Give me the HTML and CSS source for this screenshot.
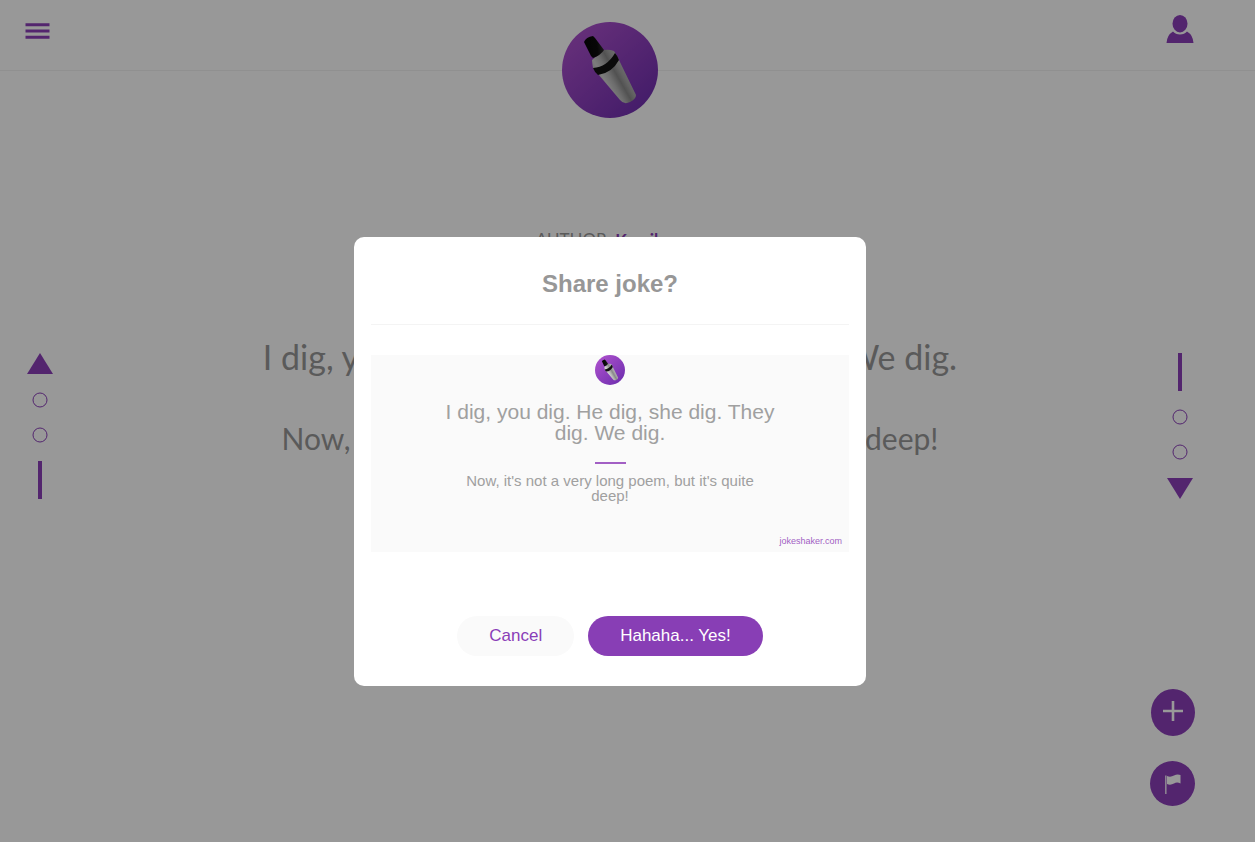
FILE: index.html
```html
<!DOCTYPE html>
<html lang="en">
<head>
<meta charset="utf-8">
<title>Jokeshaker</title>
<link rel="stylesheet" href="styles.css">
</head>
<body>
<svg class="defs" aria-hidden="true">
  <defs>
    <linearGradient id="disc" x1="0.1" y1="0.1" x2="0.85" y2="0.9">
      <stop offset="0" stop-color="#ab50cc"/>
      <stop offset="1" stop-color="#7230b0"/>
    </linearGradient>
    <linearGradient id="steel" gradientUnits="userSpaceOnUse" x1="38" y1="66" x2="66" y2="50">
      <stop offset="0" stop-color="#b4b4b4"/>
      <stop offset="0.25" stop-color="#d0d0d0"/>
      <stop offset="0.45" stop-color="#b4b4b4"/>
      <stop offset="0.65" stop-color="#888"/>
      <stop offset="0.8" stop-color="#a4a4a4"/>
      <stop offset="1" stop-color="#b8b8b8"/>
    </linearGradient>
    <linearGradient id="cap" x1="0" y1="0.5" x2="1" y2="0.4">
      <stop offset="0" stop-color="#050505"/>
      <stop offset="0.65" stop-color="#0c0c0c"/>
      <stop offset="1" stop-color="#303030"/>
    </linearGradient>
    <symbol id="shaker" viewBox="0 0 96 96">
      <circle cx="48" cy="48" r="48" fill="url(#disc)"/>
      <path d="M30 38Q30 40 31 46L58 78Q62 83 68 80Q74 77 74 73L57 38Q54 32 52 29Q47 27 42 28Z" fill="url(#steel)"/>
      <path d="M31 46Q45 45 53 31Q55 33 57 38Q50 51 36 53Q33 51 31 46Z" fill="#111"/>
      <path d="M22 20Q24 15 31 14L33 16L42 28Q39 33 31 36L29 34Z" fill="url(#cap)"/>
    </symbol>
    <symbol id="ring" viewBox="0 0 16 16">
      <circle cx="8" cy="8" r="7" fill="none" stroke="currentColor" stroke-width="1"/>
    </symbol>
  </defs>
</svg>

<header class="header">
  <button class="icon-button" aria-label="Menu">
    <svg width="25" height="17" viewBox="0 0 25 17"><path d="M0.500 0.300h24v3H0.500zM0.500 6.500h24v3H0.500zM0.500 12.700h24v3H0.500z" fill="currentColor"/></svg>
  </button>
  <a class="logo" href="#" aria-label="Jokeshaker home"><svg width="96" height="96"><use href="#shaker"/></svg></a>
  <button class="icon-button" aria-label="Profile">
    <svg width="28" height="28" viewBox="0 0 28 28"><g fill="currentColor"><ellipse cx="14" cy="8.700" rx="7.500" ry="8.700"/><path d="M0.500 28Q1 20 7 16.500Q9.500 19.500 14 19.500Q18.500 19.500 21 16.500Q27 20 27.500 28Z"/></g></svg>
  </button>
</header>

<main class="main">
  <nav class="side" aria-label="Previous jokes">
    <button class="step" aria-label="Previous"><svg width="26" height="21" viewBox="0 0 26 21"><path d="M13 0L26 21H0Z" fill="currentColor"/></svg></button>
    <svg width="16" height="16"><use href="#ring"/></svg>
    <svg width="16" height="16"><use href="#ring"/></svg>
    <span class="bar"></span>
  </nav>
  <article class="joke">
    <p class="author">AUTHOR: <a href="#">Kamil</a></p>
    <h1 class="setup">I dig, you dig. He dig, she dig. They dig. We dig.</h1>
    <p class="punchline">Now, it's not a very long poem, but it's quite deep!</p>
  </article>
  <nav class="side" aria-label="Next jokes">
    <span class="bar"></span>
    <svg width="16" height="16"><use href="#ring"/></svg>
    <svg width="16" height="16"><use href="#ring"/></svg>
    <button class="step" aria-label="Next"><svg width="26" height="21" viewBox="0 0 26 21"><path d="M0 0H26L13 21Z" fill="currentColor"/></svg></button>
  </nav>
</main>

<div class="actions">
  <button class="round round-add" aria-label="Add joke">
    <svg width="20" height="20" viewBox="0 0 20 20"><path d="M10 0V20M0 10H20" stroke="currentColor" stroke-width="2.600"/></svg>
  </button>
  <button class="round" aria-label="Report joke">
    <svg width="16" height="20" viewBox="0 0 16 20"><path d="M0 1.500H1.600V20H0Z" fill="currentColor" opacity=".8"/><path d="M2 2Q5.500 3.500 9 1.500Q12 0 15.500 1V9.500Q12 7.500 9 9.500Q5.500 11.500 2 10Z" fill="currentColor"/></svg>
  </button>
</div>

<div class="overlay">
  <section class="modal" role="dialog" aria-modal="true" aria-labelledby="share-title">
    <h2 class="title" id="share-title">Share joke?</h2>
    <div class="card">
      <svg width="30" height="30"><use href="#shaker"/></svg>
      <p class="card-setup">I dig, you dig. He dig, she dig. They dig. We dig.</p>
      <hr class="rule">
      <p class="card-punchline">Now, it's not a very long poem, but it's quite deep!</p>
      <p class="site">jokeshaker.com</p>
    </div>
    <div class="buttons">
      <button class="button">Cancel</button>
      <button class="button button-primary">Hahaha... Yes!</button>
    </div>
  </section>
</div>
</body>
</html>
```
FILE: styles.css
```css
* { box-sizing: border-box; }
body {
  margin: 0;
  min-height: 100vh;
  background: #fefefe;
  color: #979797;
  font-family: Lato, "Open Sans", sans-serif;
}
button {
  padding: 0;
  border: 0;
  background: none;
  color: #8a3eb8;
  font: inherit;
}
svg { display: block; }
p, h1, h2 { margin: 0; font-weight: 400; }
.defs { position: absolute; width: 0; height: 0; }

.header {
  display: grid;
  grid-template-columns: 1fr auto 1fr;
  height: 71px;
  padding: 0 61px 0 25px;
  border-bottom: 1px solid #f0f0f0;
}
.icon-button { align-self: start; justify-self: start; padding-top: 23px; }
.icon-button:last-child { justify-self: end; padding-top: 15px; }
.logo { padding-top: 22px; }

.main {
  display: grid;
  grid-template-columns: 80px 1fr 80px;
  padding-right: 35px;
}
.side {
  display: flex;
  flex-direction: column;
  align-items: center;
  justify-content: space-between;
  height: 146px;
  margin-top: 282px;
  color: #8a3eb8;
}
.bar { width: 4px; height: 38px; background: currentColor; }

.joke { padding-top: 159px; text-align: center; }
.author { padding-right: 26px; font-size: 17px; line-height: 20px; }
.author a { color: #8a3eb8; font-weight: 700; text-decoration: none; }
.setup { margin-top: 87px; font-size: 34px; line-height: 40px; }
.punchline { margin-top: 44px; font-size: 30px; line-height: 34px; }

.actions {
  position: fixed;
  right: 60px;
  bottom: 36px;
  display: flex;
  flex-direction: column;
  align-items: flex-end;
  gap: 25px;
}
.round {
  display: grid;
  place-items: center;
  width: 45px;
  height: 45px;
  border-radius: 50%;
  background: #8a3eb8;
  color: #fff;
}
.round-add { width: 44px; height: 47px; padding-bottom: 3px; }

.overlay {
  position: fixed;
  inset: 0;
  display: flex;
  align-items: center;
  justify-content: center;
  padding: 81px 35px 0 0;
  background: rgba(0, 0, 0, .4);
  font-family: "Liberation Sans", Arial, sans-serif;
}
.modal {
  width: 100%;
  max-width: 512px;
  padding: 0 17px 30px;
  border-radius: 10px;
  background: #fff;
  text-align: center;
}
.title {
  padding: 32px 0 26px;
  border-bottom: 1px solid #f4f4f4;
  font-size: 24px;
  font-weight: 700;
  line-height: 29px;
}
.card {
  display: flex;
  flex-direction: column;
  align-items: center;
  margin-top: 30px;
  padding: 0 7px 6px;
  background: #fafafa;
  color: #a0a0a0;
}
.card-setup { max-width: 340px; margin-top: 16px; font-size: 21px; line-height: 21px; }
.rule { width: 31px; height: 2px; margin: 19px 0 9px; border: 0; background: #a25fc4; }
.card-punchline { max-width: 300px; font-size: 15px; line-height: 15px; }
.site { align-self: flex-end; margin-top: 33px; color: #a25fc4; font-size: 9px; line-height: 10px; }
.buttons { display: flex; justify-content: center; gap: 14px; margin-top: 64px; }
.button {
  height: 40px;
  padding: 0 32px;
  border-radius: 20px;
  background: #fafafa;
  font-size: 17px;
}
.button-primary { background: #883eb5; color: #fff; }
```
